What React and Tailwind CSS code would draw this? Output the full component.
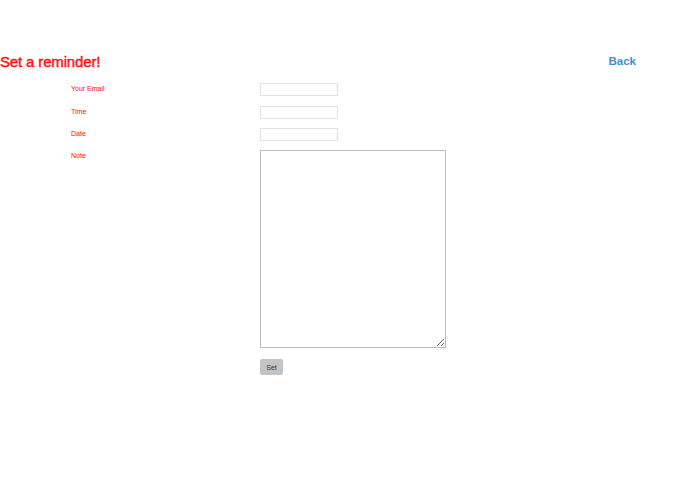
export default function App() {
  const font = { fontFamily: '"Liberation Sans", Arial, sans-serif' };
  return (
    <div className="w-[695px] h-[494px] bg-white pt-[54px]" style={font}>
      <div className="flex items-start justify-between pr-[59px]">
        <h1 className="m-0 text-[15px] leading-[15px] text-[#ff0d0d] font-normal tracking-[-0.15px] [-webkit-text-stroke:0.4px_#ff0d0d]">Set a reminder!</h1>
        <a className="text-[11.5px] leading-[12px] font-bold text-[#3d8fd1] mt-[0.5px] cursor-pointer">Back</a>
      </div>
      <form className="flex flex-col mt-[14px] pl-[71px]" onSubmit={(e) => e.preventDefault()}>
        <div className="flex items-start">
          <label className="w-[189px] text-[7px] leading-[7px] text-[#ff0d0d] mt-[2px]">Your Email</label>
          <input type="email" className="w-[78px] h-[13px] border border-[#e2e2e2] outline-none bg-white" />
        </div>
        <div className="flex items-start mt-[10px]">
          <label className="w-[189px] text-[7px] leading-[7px] text-[#ff0d0d] mt-[2px]">Time</label>
          <input type="text" className="w-[78px] h-[13px] border border-[#e2e2e2] outline-none bg-white" />
        </div>
        <div className="flex items-start mt-[9px]">
          <label className="w-[189px] text-[7px] leading-[7px] text-[#ff0d0d] mt-[2px]">Date</label>
          <input type="text" className="w-[78px] h-[13px] border border-[#e2e2e2] outline-none bg-white" />
        </div>
        <div className="flex items-start mt-[9px]">
          <label className="w-[189px] text-[7px] leading-[7px] text-[#ff0d0d] mt-[2px]">Note</label>
          <textarea className="w-[186px] h-[198px] border border-[#bcbcbc] outline-none bg-white" />
        </div>
        <div className="flex mt-[11px] pl-[189px]">
          <button type="submit" className="w-[23px] h-[16px] bg-[#c4c4c4] rounded-[2px] text-[7px] leading-[7px] text-[#333] flex items-center justify-center">Set</button>
        </div>
      </form>
    </div>
  );
}
